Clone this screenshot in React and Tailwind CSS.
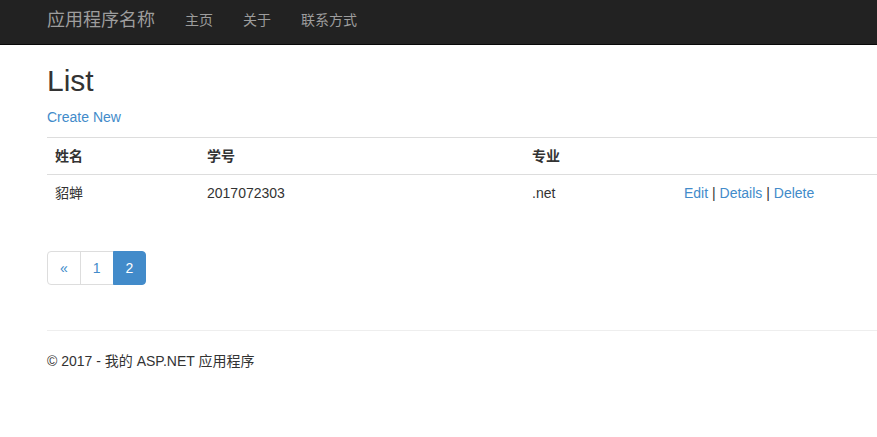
import React from "react";

const font = {
  fontFamily: '"Liberation Sans", Arial, "Noto Sans CJK SC", sans-serif',
};

function App() {
  const students = [{ id: 1, name: "貂蝉", no: "2017072303", major: ".net" }];

  return (
    <div className="min-h-screen bg-white text-[14px] leading-[20px] text-[#333]" style={font}>
      {/* Navbar */}
      <nav className="h-[45px] bg-[#222] border-b border-[#080808] flex items-center pl-[47px] pb-[5px]">
        <a href="#" className="text-[18px] leading-[20px] text-[#9d9d9d]">
          应用程序名称
        </a>
        <ul className="flex items-center ml-[30px] gap-[30px] text-[#9d9d9d]">
          <li><a href="#">主页</a></li>
          <li><a href="#">关于</a></li>
          <li><a href="#">联系方式</a></li>
        </ul>
      </nav>

      <div className="pl-[47px] overflow-hidden">
        <h2 className="mt-[19px] mb-[10px] text-[30px] leading-[33px] font-normal">List</h2>
        <p className="mb-[10px]">
          <a href="#" className="text-[#428bca]">Create New</a>
        </p>

        <table className="w-full border-collapse">
          <tbody>
            <tr>
              <th className="w-[152px] text-left font-bold p-[8px] border-t border-[#ddd]">姓名</th>
              <th className="w-[325px] text-left font-bold p-[8px] border-t border-[#ddd]">学号</th>
              <th className="w-[152px] text-left font-bold p-[8px] border-t border-[#ddd]">专业</th>
              <th className="p-[8px] border-t border-[#ddd]"></th>
            </tr>
            {students.map((s) => (
              <tr key={s.id}>
                <td className="p-[8px] border-t border-[#ddd]">{s.name}</td>
                <td className="p-[8px] border-t border-[#ddd]">{s.no}</td>
                <td className="p-[8px] border-t border-[#ddd]">{s.major}</td>
                <td className="p-[8px] border-t border-[#ddd]">
                  <a href="#" className="text-[#428bca]">Edit</a> |{" "}
                  <a href="#" className="text-[#428bca]">Details</a> |{" "}
                  <a href="#" className="text-[#428bca]">Delete</a>
                </td>
              </tr>
            ))}
          </tbody>
        </table>

        <ul className="flex mt-[40px] mb-[20px]">
          <li>
            <a href="#" className="block px-[12px] py-[6px] border border-[#ddd] rounded-l-[4px] text-[#428bca]">«</a>
          </li>
          <li>
            <a href="#" className="block px-[12px] py-[6px] border border-[#ddd] -ml-px text-[#428bca]">1</a>
          </li>
          <li>
            <a href="#" className="block px-[12px] py-[6px] border border-[#428bca] -ml-px rounded-r-[4px] bg-[#428bca] text-white">2</a>
          </li>
        </ul>

        <hr className="mt-[45px] mb-[20px] border-0 border-t border-[#eee]" />
        <footer>
          <p>© 2017 - 我的 ASP.NET 应用程序</p>
        </footer>
      </div>
    </div>
  );
}

export default App;
